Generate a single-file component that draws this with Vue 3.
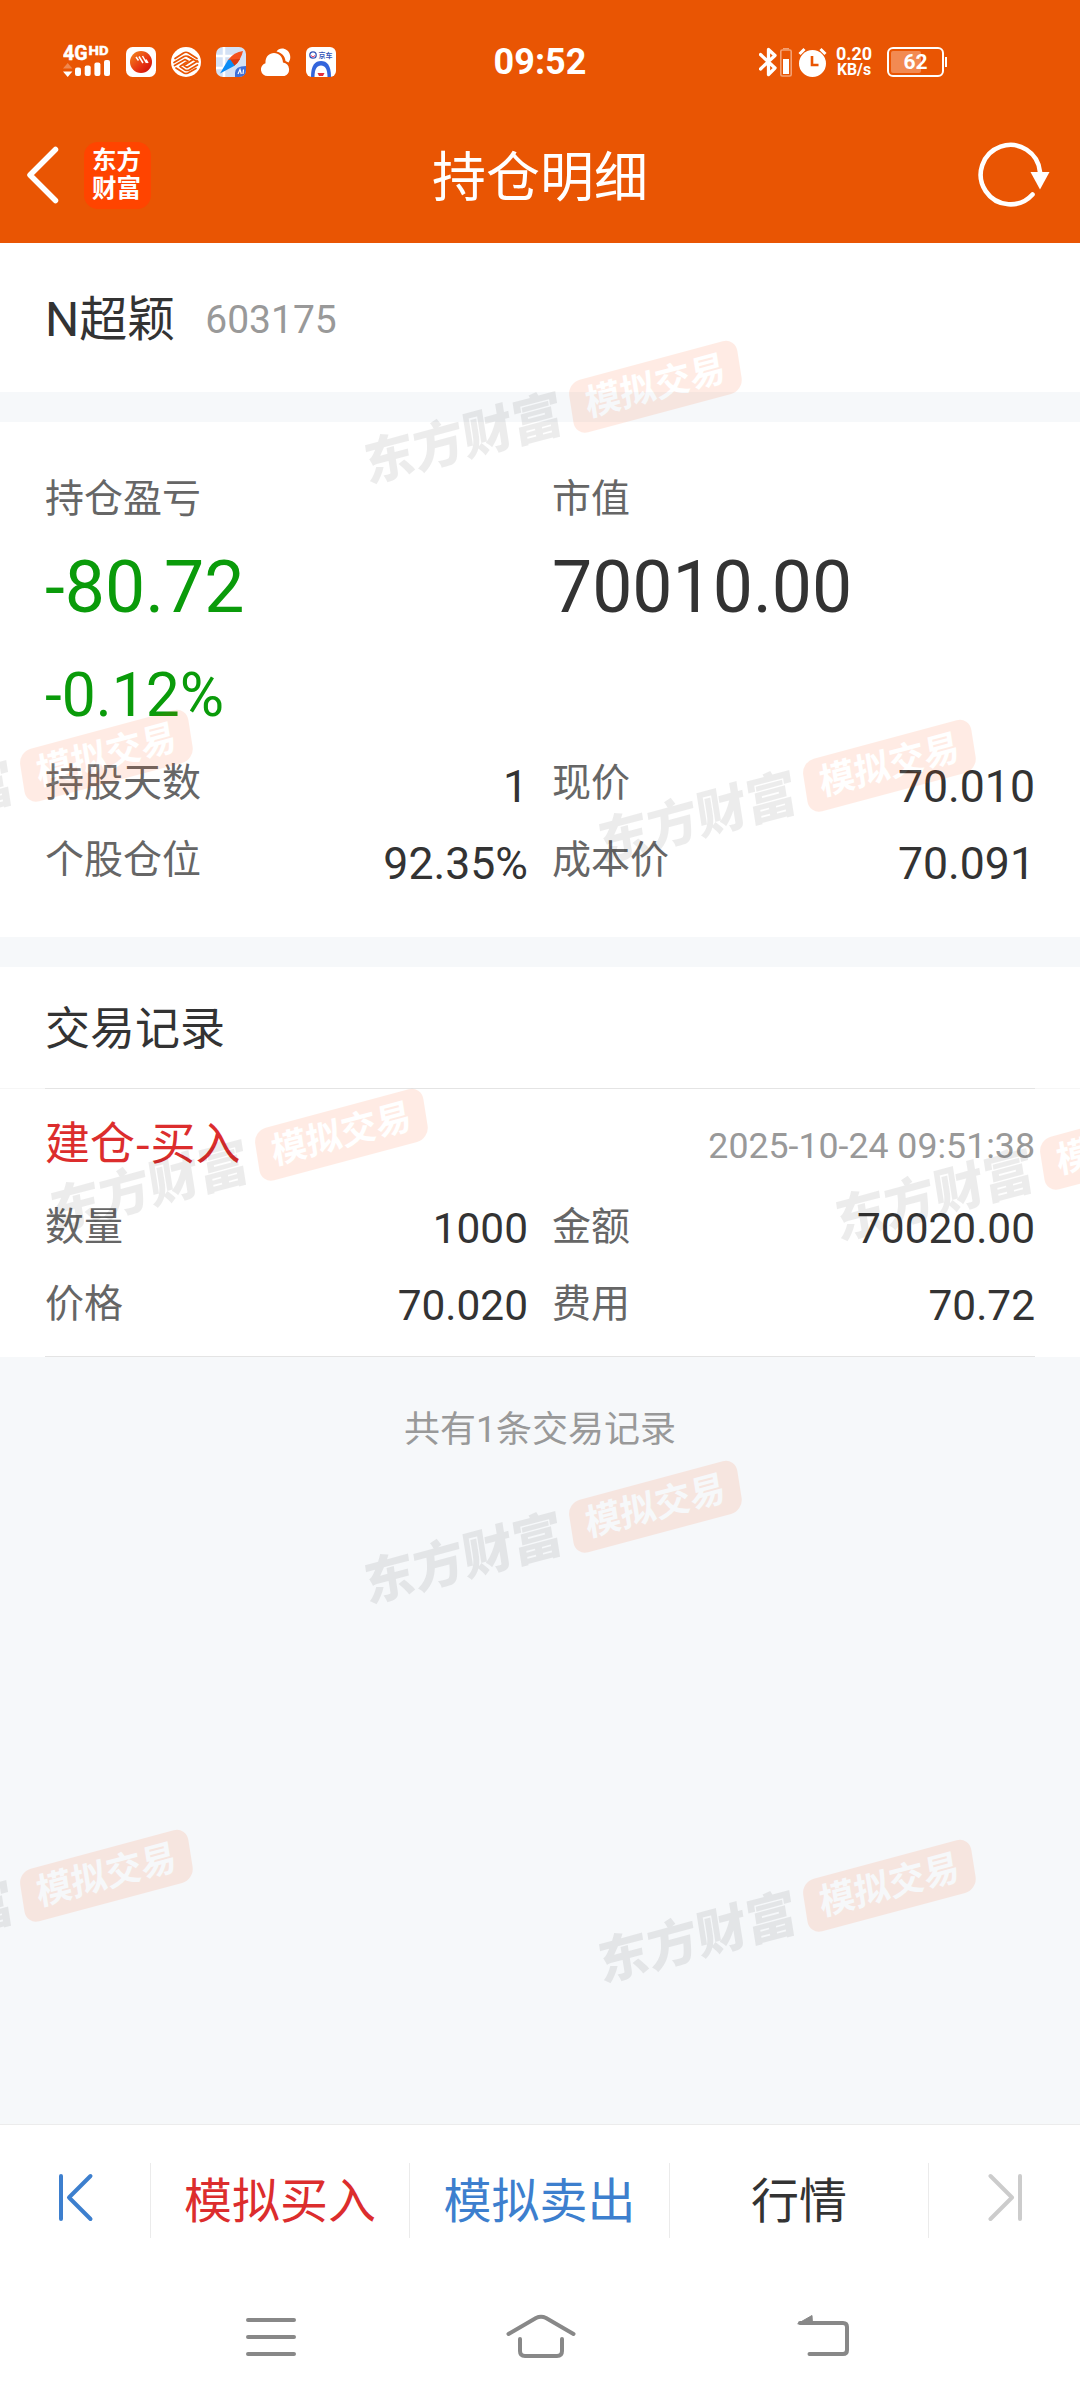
<template>
  <div class="page">
    <header class="header">
      <div class="status">
        <div class="status-left">
          <svg class="signal" width="48" height="36" viewBox="0 0 48 36">
            <g stroke="#fff" stroke-width=".5">
              <text x="0" y="17.5" font-size="19.5" textLength="24.5" lengthAdjust="spacingAndGlyphs">4G</text>
              <text x="25.5" y="12.5" font-size="13" textLength="20" lengthAdjust="spacingAndGlyphs">HD</text>
            </g>
            <path d="M0 26.5 4.7 21l4.700 5.500z" opacity=".3" />
            <path d="M0 29.5h9.400L4.700 35z" />
            <rect x="12" y="25.5" width="6" height="8.5" rx="2" />
            <rect x="21.7" y="23.5" width="6" height="10.5" rx="2" />
            <rect x="31.4" y="20.5" width="6" height="13.5" rx="2" />
            <rect x="41" y="18" width="6" height="16" rx="2" />
          </svg>
          <svg width="30" height="30" viewBox="0 0 30 30">
            <defs>
              <linearGradient id="ball" x1="0" y1="0" x2="1" y2="1">
                <stop offset="0" stop-color="#f58a1c" />
                <stop offset=".6" stop-color="#e63212" />
                <stop offset="1" stop-color="#c80a0a" />
              </linearGradient>
            </defs>
            <rect width="30" height="30" rx="6.5" fill="#fff" />
            <circle cx="15" cy="15" r="11" fill="url(#ball)" />
            <path d="M10 10l2.500 3.500M13 9.500l4 6.500M16.500 9l4 7M20 12.500l2 3.500" stroke="#fff" stroke-width="1.500" />
          </svg>
          <svg width="30" height="30" viewBox="0 0 30 30">
            <circle cx="15" cy="15" r="15" fill="#fff" />
            <g fill="none" stroke="#e95503" stroke-width="1.700" stroke-linejoin="round" stroke-linecap="round">
              <path d="M4 11.500 12.500 6Q15 4.500 17.500 6L26 11.500" />
              <path d="M3 15.500 13 9.500Q15 8.500 17 9.500l5 3-9 6 3 2 10.500-6.500" />
              <path d="M27 15 17 9.500" />
              <path d="M3.500 18.500 14 12.500l3 1.500-8 5.500 5 3.500q2 1 4 0l8.500-5" />
              <path d="M5 21l8 5q2 1 4 0l8-4.500" />
            </g>
          </svg>
          <svg width="30" height="30" viewBox="0 0 30 30">
            <rect width="30" height="30" rx="7" fill="#d3e1f5" />
            <path d="M8 0v30M0 9h20M0 21h9" stroke="#fff" stroke-width="2.500" />
            <path d="M19 30v-4q0-7 11-7v4q0 7-7 7z" fill="#3f70d8" />
            <path d="M27 4Q18 5 12 13l6.500 5.500Q25 13 27 4z" fill="#f4511e" />
            <path d="M4 26.500 12 13l2.500-.5 4.500 6z" fill="#0a8cf5" />
            <path d="M14.500 12.500 18.500 18.500Q22 16 24 12z" fill="#d93a12" />
            <path d="m22 27 2-4.500 1.300 4.500M27.500 22.500 27 27" fill="none" stroke="#fff" stroke-width="1.200" />
          </svg>
          <svg width="30" height="30" viewBox="0 0 30 30">
            <path d="M6.500 29a6.500 6.500 0 0 1-2-12.700C4 10 8 6 13 6c5 0 8.500 3.500 9 9.500a7 7 0 0 1 1.500 13.500z" fill="#fff" />
            <path d="M15.500 4.500c3-5 12-3.500 13.500 3.500.7 3 0 5.500-1.500 7.500l-3-1.500C24 9 20.500 5.500 15.500 4.500z" fill="#fff" />
          </svg>
          <svg width="30" height="30" viewBox="0 0 30 30">
            <rect width="30" height="30" rx="6" fill="#fff" />
            <circle cx="7" cy="8" r="3.200" fill="none" stroke="#3556b8" stroke-width="1.300" />
            <path d="M5 8.500q2 3 4 0" stroke="#e0356a" fill="none" />
            <text x="12.500" y="11" font-size="7" fill="#3556b8" class="tiny">京车</text>
            <path d="M5 30C5 18 9 14 15 14s10 4 10 16z" fill="#3365dc" />
            <path d="M8.500 30c0-8 2.500-11.500 6.500-11.500s6.500 3.500 6.500 11.500z" fill="#fff" />
            <path d="M11.500 26h7l-1.500 3h-4z" fill="#e32d3b" />
          </svg>
        </div>
        <div class="time">09:52</div>
        <div class="status-right">
          <svg class="bt" width="18" height="30" viewBox="0 0 18 30">
            <path d="M1.500 7.500 16 21l-6.500 6.500v-25L16 8.500 1.500 22" fill="none" stroke="#fff" stroke-width="3.300" stroke-linejoin="round" stroke-linecap="round" />
          </svg>
          <svg class="mini" width="12" height="30" viewBox="0 0 12 30">
            <path d="M3 1h6v1.500H3z" fill="#f4a173" />
            <rect x=".8" y="3" width="10.400" height="26" rx="1.500" fill="none" stroke="#f4a173" stroke-width="1.600" />
            <path d="M3 12h6v15H3z" fill="#fff" />
          </svg>
          <svg class="alarm" width="29" height="30" viewBox="0 0 29 30">
            <circle cx="14.500" cy="16.500" r="13.500" fill="#fff" />
            <path d="M1.500 7 6.500 2M22.500 2l5 5" stroke="#fff" stroke-width="3" />
            <path d="M14 9v9h6.500" fill="none" stroke="#e95503" stroke-width="2.600" />
          </svg>
          <div class="speed">
            <span>0.20</span>
            <span class="unit">KB/s</span>
          </div>
          <div class="battery"><i></i><b>62</b></div>
        </div>
      </div>
      <div class="navbar">
        <svg class="back" width="34" height="58" viewBox="0 0 34 58">
          <path d="M29.500 3.500 4 29l25.500 25.500" fill="none" stroke="#fff" stroke-width="5.500" stroke-linecap="round" stroke-linejoin="round" />
        </svg>
        <div class="logo">东方<br />财富</div>
        <h1 class="title">持仓明细</h1>
        <svg class="refresh" width="72" height="66" viewBox="0 0 72 66">
          <path d="M54.500 52.500A29.700 29.700 0 1 1 62 30" fill="none" stroke="#fff" stroke-width="4.600" stroke-linecap="round" />
          <path d="M52.500 30h19L62 47.500z" fill="#fff" />
        </svg>
      </div>
    </header>

    <main class="content">
      <section class="stock">
        <span class="stock-name">{{ stock.name }}</span>
        <span class="stock-code">{{ stock.code }}</span>
      </section>

      <section class="position">
        <div class="columns">
          <div class="col">
            <div class="label">持仓盈亏</div>
            <div class="big down">{{ stock.profit }}</div>
            <div class="percent down">{{ stock.percent }}</div>
          </div>
          <div class="col">
            <div class="label">市值</div>
            <div class="big">{{ stock.value }}</div>
          </div>
        </div>
        <div class="cells">
          <div v-for="item in details" :key="item.label" class="cell">
            <span class="label">{{ item.label }}</span>
            <span class="num">{{ item.value }}</span>
          </div>
        </div>
      </section>

      <section class="records">
        <h2 class="records-title">交易记录</h2>
        <div class="record">
          <div class="record-head">
            <span class="record-type">建仓-买入</span>
            <span class="record-time">2025-10-24 09:51:38</span>
          </div>
          <div class="cells">
            <div v-for="item in record" :key="item.label" class="cell">
              <span class="label">{{ item.label }}</span>
              <span class="num">{{ item.value }}</span>
            </div>
          </div>
        </div>
      </section>
      <p class="total">共有1条交易记录</p>
    </main>

    <!-- 水印 -->
    <div class="watermarks">
      <div
        v-for="(mark, i) in marks"
        :key="i"
        class="mark"
        :style="{ left: mark[0] + 'px', top: mark[1] + 'px' }"
      >
        <span class="mark-name">东方财富</span>
        <span class="mark-tag">模拟交易</span>
      </div>
    </div>

    <footer class="footer">
      <div class="toolbar">
        <div class="tool side">
          <svg width="38" height="50" viewBox="0 0 38 50">
            <path d="M4 4v43M33.500 4 12 25.500 33.500 47" />
          </svg>
        </div>
        <div class="tool buy">模拟买入</div>
        <div class="tool sell">模拟卖出</div>
        <div class="tool">行情</div>
        <div class="tool side next">
          <svg width="38" height="50" viewBox="0 0 38 50">
            <path d="M34 4v43M4.500 4 26 25.500 4.500 47" />
          </svg>
        </div>
      </div>
      <div class="sysnav">
        <svg width="50" height="50" viewBox="0 0 50 50">
          <path d="M2 8h46M2 25h46M2 42h46" />
        </svg>
        <svg class="home" width="70" height="50" viewBox="0 0 70 50">
          <path d="M2.500 22 30 6q5-2.500 10 0l27.500 16M14 27v12q0 5 5 5h32q5 0 5-5V27" />
        </svg>
        <svg class="return" width="56" height="50" viewBox="0 0 56 50">
          <path d="M4 11h43q4 0 4 4v23q0 4-4 4H13.500" />
          <path class="tip" d="M2 11.500 16 3.500 16.500 12z" />
        </svg>
      </div>
    </footer>
  </div>
</template>

<script setup>
import { ref } from "vue";

const stock = ref({
  name: "N超颖",
  code: "603175",
  profit: "-80.72",
  percent: "-0.12%",
  value: "70010.00",
});

const details = ref([
  { label: "持股天数", value: "1" },
  { label: "现价", value: "70.010" },
  { label: "个股仓位", value: "92.35%" },
  { label: "成本价", value: "70.091" },
]);

const record = ref([
  { label: "数量", value: "1000" },
  { label: "金额", value: "70020.00" },
  { label: "价格", value: "70.020" },
  { label: "费用", value: "70.72" },
]);

// 水印中心点
const marks = [
  [552, 414],
  [3, 783],
  [786, 793],
  [238, 1162],
  [1023, 1171],
  [552, 1534],
  [3, 1903],
  [786, 1913],
];
</script>

<style>
body {
  margin: 0;
}
</style>

<style scoped>
.page {
  position: relative;
  display: flex;
  flex-direction: column;
  width: 1080px;
  height: 2400px;
  overflow: hidden;
  background: #f6f8fa;
  color: #333;
  font-family: Roboto, "Noto Sans CJK SC", sans-serif;
}

svg {
  display: block;
  flex: none;
}

/* 顶部 */
.header {
  height: 243px;
  background: #e95503;
  color: #fff;
}
.status {
  display: grid;
  grid-template-columns: 1fr auto 1fr;
  align-items: center;
  height: 124px;
}
.status-left {
  display: flex;
  align-items: center;
  gap: 15px;
  padding-left: 63px;
}
.signal {
  fill: #fff;
  font-weight: 700;
  margin-top: -4px;
}
.tiny {
  font-weight: 700;
}
.time {
  font-size: 36px;
  font-weight: 700;
  line-height: 40px;
}
.status-right {
  display: flex;
  align-items: center;
  justify-content: flex-end;
  padding-right: 133px;
}
.mini {
  margin-left: 3px;
}
.alarm {
  margin-left: 6px;
}
.speed {
  display: flex;
  flex-direction: column;
  align-items: center;
  width: 36px;
  margin: 0 15px 0 9px;
  font-size: 18px;
  font-weight: 700;
  line-height: 16px;
}
.unit {
  font-size: 15.8px;
}
.battery {
  position: relative;
  box-sizing: border-box;
  width: 57px;
  height: 30px;
  margin-right: 3px;
  border: 2px solid #fff;
  border-radius: 6px;
  text-align: center;
}
.battery::after {
  content: "";
  position: absolute;
  right: -5px;
  top: 8px;
  width: 2px;
  height: 10px;
  background: #fff;
}
.battery i {
  position: absolute;
  left: 2px;
  top: 2px;
  width: 30px;
  height: 22px;
  border-radius: 2px;
  background: #f28a52;
}
.battery b {
  position: relative;
  display: block;
  font-size: 21px;
  line-height: 26px;
}
.navbar {
  display: flex;
  align-items: center;
  height: 102px;
}
.back {
  margin-left: 26px;
}
.logo {
  box-sizing: border-box;
  width: 67px;
  height: 67px;
  margin-left: 24px;
  padding: 5px 2px 0 0;
  border-radius: 14px;
  background: #ff4400;
  font-size: 24.5px;
  font-weight: 700;
  line-height: 28.5px;
  text-align: center;
}
.title {
  flex: 1;
  margin: 0;
  padding: 8px 49px 0 0;
  font-size: 54px;
  font-weight: 400;
  line-height: 80px;
  text-align: center;
}
.refresh {
  margin-right: 30px;
}

/* 内容 */
.content {
  flex: 1;
}
.stock {
  display: flex;
  box-sizing: border-box;
  height: 149px;
  padding: 40px 45px 0;
  background: #fff;
  line-height: 74px;
}
.stock-name {
  font-size: 48px;
}
.stock-code {
  margin-left: 30px;
  font-size: 39px;
  color: #999;
}
.position {
  box-sizing: border-box;
  height: 515px;
  margin-top: 30px;
  padding: 47px 45px 0;
  background: #fff;
}
.columns,
.cells {
  display: grid;
  grid-template-columns: 1fr 1fr;
  column-gap: 24px;
}
.label {
  font-size: 39px;
  color: #666;
}
.col .label {
  line-height: 60px;
}
.big {
  margin-top: 14px;
  font-size: 71.5px;
  line-height: 90px;
}
.percent {
  margin: 23px 0 9px;
  font-size: 60.5px;
  line-height: 80px;
}
.down {
  color: #0a9b0a;
}
.cell {
  display: flex;
  justify-content: space-between;
  height: 77px;
  line-height: 76px;
}
.num {
  font-size: 44.6px;
  line-height: 84px;
}

.records {
  margin-top: 30px;
  background: #fff;
}
.records-title {
  box-sizing: border-box;
  height: 122px;
  margin: 0;
  padding: 4px 45px 0;
  border-bottom: 1px solid #f6f6f6;
  font-size: 45px;
  font-weight: 400;
  line-height: 117px;
}
.record {
  box-sizing: border-box;
  height: 269px;
  margin: -1px 45px 0;
  border-top: 1px solid #e4e4e4;
  border-bottom: 1px solid #e4e4e4;
}
.record-head {
  display: flex;
  align-items: center;
  justify-content: space-between;
  box-sizing: border-box;
  height: 100px;
  padding-top: 12px;
  line-height: 56px;
}
.record-type {
  margin-bottom: 8px;
  font-family: "Noto Sans CJK SC", sans-serif;
  font-size: 45px;
  color: #dc2d2d;
}
.record-time {
  margin-top: 2px;
  font-size: 35.7px;
  color: #999;
}
.record .num {
  font-size: 42.4px;
  line-height: 79px;
}
.total {
  margin: 0;
  font-size: 36px;
  line-height: 147px;
  color: #999;
  text-align: center;
}

/* 水印浮在内容上方 */
.watermarks {
  position: absolute;
  inset: 243px 0 276px;
  overflow: hidden;
  pointer-events: none;
}
.mark {
  position: absolute;
  display: flex;
  align-items: center;
  justify-content: space-between;
  width: 388px;
  height: 54px;
  margin: -270px 0 0 -194px;
  transform: rotate(-15deg) skewX(-6deg);
  white-space: nowrap;
}
.mark-name {
  padding-top: 4px;
  font-size: 51px;
  font-weight: 900;
  line-height: 54px;
  color: rgba(0, 0, 0, 0.075);
}
.mark-tag {
  width: 174px;
  border-radius: 13px;
  background: #ff4a00;
  color: #fff;
  font-size: 36px;
  font-weight: 700;
  line-height: 53px;
  text-align: center;
  opacity: 0.1;
}

/* 底部 */
.footer {
  position: relative;
  height: 276px;
  background: #fff;
}
.toolbar {
  display: flex;
  align-items: center;
  box-sizing: border-box;
  height: 151px;
  border-top: 1px solid #ececec;
}
.tool {
  box-sizing: border-box;
  width: 260px;
  height: 75px;
  border-right: 1px solid #ebebeb;
  font-size: 48px;
  line-height: 77px;
  text-align: center;
}
.side {
  width: 151px;
  padding: 9px 0 0 57px;
}
.side path {
  fill: none;
  stroke: #3d7fce;
  stroke-width: 4;
  stroke-linecap: round;
  stroke-linejoin: round;
}
.next {
  border: 0;
  padding-left: 57px;
}
.next path {
  stroke: #ccc;
}
.buy {
  color: #dc2d2d;
}
.sell {
  color: #3d7fce;
}
.sysnav {
  display: flex;
  align-items: center;
  height: 123px;
  padding-left: 246px;
}
.sysnav path {
  fill: none;
  stroke: #888;
  stroke-width: 4;
  stroke-linecap: round;
  stroke-linejoin: round;
}
.sysnav .tip {
  fill: #888;
  stroke-width: 1;
}
.home {
  margin-left: 210px;
}
.return {
  margin-left: 220px;
}
</style>
